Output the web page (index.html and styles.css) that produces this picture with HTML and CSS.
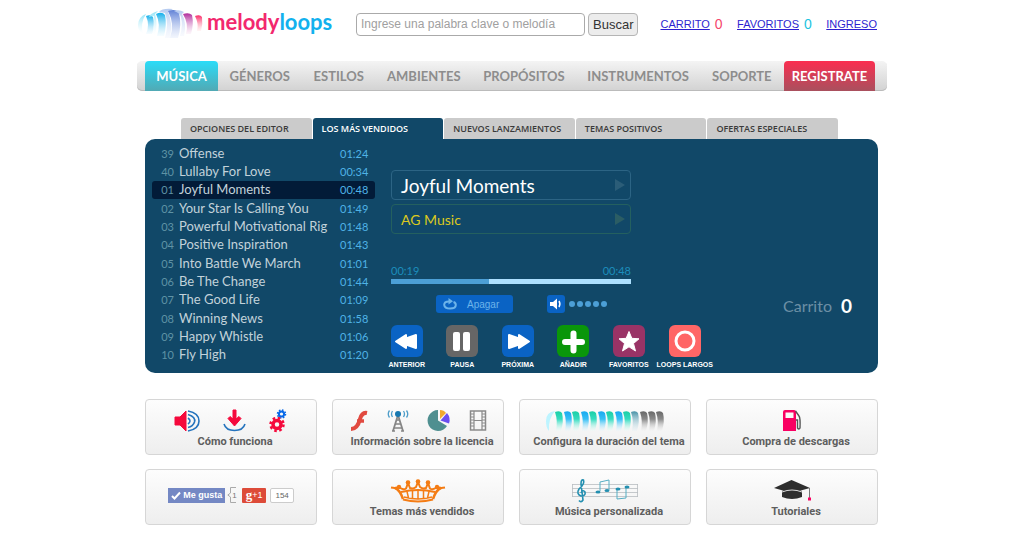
FILE: index.html
```html
<!DOCTYPE html>
<html lang="es">
<head>
<meta charset="utf-8">
<title>melodyloops</title>
<link rel="stylesheet" href="styles.css">
</head>
<body>
<div class="page">
  <header class="header">
    <a class="logo" href="#">
      <svg class="logo-mark" width="66" height="32" viewBox="0 0 66 32" aria-hidden="true">
        <defs>
          <linearGradient id="c1" x2="0" y2="1"><stop offset="0" stop-color="#8fe4f7"/><stop offset="1" stop-color="#fff" stop-opacity=".2"/></linearGradient>
          <linearGradient id="c2" x2="0" y2="1"><stop offset="0" stop-color="#12aeea"/><stop offset="1" stop-color="#e3f6ff" stop-opacity=".3"/></linearGradient>
          <linearGradient id="c3" x2="0" y2="1"><stop offset="0" stop-color="#5f80d6"/><stop offset="1" stop-color="#dfe8fa" stop-opacity=".4"/></linearGradient>
          <linearGradient id="c4" x2="0" y2="1"><stop offset="0" stop-color="#b02a9c"/><stop offset="1" stop-color="#f6dff0" stop-opacity=".3"/></linearGradient>
          <linearGradient id="c5" x2="0" y2="1"><stop offset="0" stop-color="#fb2a68"/><stop offset="1" stop-color="#fdd" stop-opacity=".3"/></linearGradient>
          <linearGradient id="c6" x2="0" y2="1"><stop offset="0" stop-color="#b4caf0"/><stop offset="1" stop-color="#e8eefb" stop-opacity=".3"/></linearGradient>
        </defs>
        <path d="M9 6Q1 9 1 17Q1 23 6 26Q3 15 9 6Z" fill="url(#c1)"/>
        <path d="M9 8Q14 6 16 9Q18 17 15 26H9Q13 17 9 8Z" fill="url(#c2)"/>
        <path d="M21 3Q12 6 12 9L17 8Q18 18 14 27H18Q21 15 18 6Z" fill="url(#c1)"/>
        <path d="M19 6Q25 3 28 7Q30 17 27 28H20Q24 16 19 6Z" fill="url(#c2)"/>
        <path d="M36 1Q25 0 22 4L28 5Q32 16 28 30H33Q36 14 31 4Z" fill="url(#c6)"/>
        <path d="M31 3Q39 0 42 5Q45 17 41 30H33Q38 16 31 3Z" fill="url(#c3)"/>
        <path d="M47 4Q42 1 37 3Q43 5 44 9Q46 18 43 28H47Q50 15 45 6Z" fill="url(#c6)"/>
        <path d="M46 6Q52 4 55 7Q57 16 54 26H49Q52 16 46 6Z" fill="url(#c4)"/>
        <path d="M58 8Q63 6 65 9Q66 16 64 23H60Q62 16 58 8Z" fill="url(#c5)"/>
      </svg>
      <span class="logo-text">melody<span class="logo-loops">loops</span></span>
    </a>
    <form class="search">
      <input class="search-input" type="text" placeholder="Ingrese una palabra clave o melodía" aria-label="Buscar melodía">
      <button class="search-button" type="button">Buscar</button>
    </form>
    <div class="account">
      <span class="account-item"><a href="#">CARRITO</a><span class="count count-cart">0</span></span>
      <span class="account-item"><a href="#">FAVORITOS</a><span class="count count-fav">0</span></span>
      <span class="account-item"><a href="#">INGRESO</a></span>
    </div>
  </header>

  <nav class="nav">
    <a class="nav-link nav-active" href="#">MÚSICA</a>
    <a class="nav-link" href="#">GÉNEROS</a>
    <a class="nav-link" href="#">ESTILOS</a>
    <a class="nav-link" href="#">AMBIENTES</a>
    <a class="nav-link" href="#">PROPÓSITOS</a>
    <a class="nav-link" href="#">INSTRUMENTOS</a>
    <a class="nav-link" href="#">SOPORTE</a>
    <a class="nav-link nav-register" href="#">REGISTRATE</a>
  </nav>

  <main class="main">
    <div class="tabs">
      <button class="tab" type="button">OPCIONES DEL EDITOR</button>
      <button class="tab tab-active" type="button">LOS MÁS VENDIDOS</button>
      <button class="tab" type="button">NUEVOS LANZAMIENTOS</button>
      <button class="tab" type="button">TEMAS POSITIVOS</button>
      <button class="tab" type="button">OFERTAS ESPECIALES</button>
    </div>

    <section class="panel">
      <ol class="playlist">
        <li class="track"><span class="num">39</span><span class="name">Offense</span><span class="time">01:24</span></li>
        <li class="track"><span class="num">40</span><span class="name">Lullaby For Love</span><span class="time">00:34</span></li>
        <li class="track track-active"><span class="num">01</span><span class="name">Joyful Moments</span><span class="time">00:48</span></li>
        <li class="track"><span class="num">02</span><span class="name">Your Star Is Calling You</span><span class="time">01:49</span></li>
        <li class="track"><span class="num">03</span><span class="name">Powerful Motivational Rig</span><span class="time">01:48</span></li>
        <li class="track"><span class="num">04</span><span class="name">Positive Inspiration</span><span class="time">01:43</span></li>
        <li class="track"><span class="num">05</span><span class="name">Into Battle We March</span><span class="time">01:01</span></li>
        <li class="track"><span class="num">06</span><span class="name">Be The Change</span><span class="time">01:44</span></li>
        <li class="track"><span class="num">07</span><span class="name">The Good Life</span><span class="time">01:09</span></li>
        <li class="track"><span class="num">08</span><span class="name">Winning News</span><span class="time">01:58</span></li>
        <li class="track"><span class="num">09</span><span class="name">Happy Whistle</span><span class="time">01:06</span></li>
        <li class="track"><span class="num">10</span><span class="name">Fly High</span><span class="time">01:20</span></li>
      </ol>

      <div class="player">
        <div class="display">
          <button class="field field-title" type="button">Joyful Moments
            <svg width="12" height="14" viewBox="0 0 12 14" aria-hidden="true"><path d="M1 1L11 7L1 13Z" fill="#2b5d78"/></svg>
          </button>
          <button class="field field-artist" type="button">AG Music
            <svg width="12" height="14" viewBox="0 0 12 14" aria-hidden="true"><path d="M1 1L11 7L1 13Z" fill="#2b5d64"/></svg>
          </button>
          <div class="times"><span>00:19</span><span>00:48</span></div>
          <input class="seek" type="range" min="0" max="48" value="19" aria-label="Posición">
          <div class="options">
            <button class="loop" type="button">
              <svg width="14" height="12" viewBox="0 0 14 12" fill="none" stroke="#6db4ea" stroke-width="2" aria-hidden="true"><path d="M6 3.500C2.500 3.500 1.200 5 1.200 6.800C1.500 9.500 4 10.500 7 10.500S12.800 9.500 12.800 7C12.800 5.500 12 4.500 10.500 4"/><path d="M5.500 0L10 3.300L5.500 6.500Z" fill="#6db4ea" stroke="none"/></svg>
              Apagar
            </button>
            <button class="mute" type="button" aria-label="Volumen">
              <svg width="14" height="12" viewBox="0 0 14 12" aria-hidden="true"><path d="M1 4H4L8 0.500V11.500L4 8H1Z" fill="#fff"/><path d="M10 3Q11.800 6 10 9" fill="none" stroke="#fff" stroke-width="1.500"/></svg>
            </button>
            <span class="dots"><i></i><i></i><i></i><i></i><i></i></span>
          </div>
        </div>
        <div class="controls">
          <button class="control" type="button"><span class="tile tile-blue"><svg width="32" height="32" viewBox="0 0 32 32"><path d="M5 16.500L15 10V13.500L25 10V23L15 19.500V23Z" fill="#fff" stroke="#fff" stroke-width="2" stroke-linejoin="round"/></svg></span>ANTERIOR</button>
          <button class="control" type="button"><span class="tile tile-gray"><svg width="32" height="32" viewBox="0 0 32 32"><rect x="7" y="7" width="7" height="19" rx="2" fill="#fff"/><rect x="17" y="7" width="7" height="19" rx="2" fill="#fff"/></svg></span>PAUSA</button>
          <button class="control" type="button"><span class="tile tile-blue"><svg width="32" height="32" viewBox="0 0 32 32"><path d="M27 16.500L17 10V13.500L7 10V23L17 19.500V23Z" fill="#fff" stroke="#fff" stroke-width="2" stroke-linejoin="round"/></svg></span>PRÓXIMA</button>
          <button class="control" type="button"><span class="tile tile-green"><svg width="32" height="32" viewBox="0 0 32 32"><path d="M16.500 8.500V25.500M8 17H25" stroke="#fff" stroke-width="6" stroke-linecap="round"/></svg></span>AÑADIR</button>
          <button class="control" type="button"><span class="tile tile-plum"><svg width="32" height="32" viewBox="0 0 32 32"><path d="M16 6.500L18.800 13.300L26 13.800L20.500 18.500L22.500 26L16 21.800L9.500 26L11.500 18.500L6 13.800L13.200 13.300Z" fill="#fff" stroke="#fff" stroke-linejoin="round"/></svg></span>FAVORITOS</button>
          <button class="control" type="button"><span class="tile tile-coral"><svg width="32" height="32" viewBox="0 0 32 32"><circle cx="16" cy="16" r="9" fill="none" stroke="#fff" stroke-width="3"/></svg></span>LOOPS LARGOS</button>
        </div>
      </div>

      <div class="cart">Carrito <span class="cart-count">0</span></div>
    </section>

    <section class="cards">
      <a class="card" href="#">
        <span class="icons icons-three">
          <svg width="26" height="24" viewBox="0 0 26 24"><path d="M1 8H6L12 2V22L6 16H1Z" fill="#f5093c" stroke="#f5093c" stroke-linejoin="round"/><g fill="none" stroke="#2473bd" stroke-width="1.600"><path d="M14 9Q18 12 14 15"/><path d="M14 5.500Q22 8 20.500 13Q19 17.500 14 18.500"/><path d="M14 2Q25 4 25 12T14 22"/></g></svg>
          <svg width="24" height="24" viewBox="0 0 24 24"><path d="M11 1H14V10L17 7.500L19 9.500L12.500 17L6 9.500L8 7.500L11 10Z" fill="#f5093c" stroke="#f5093c"/><path d="M2 15Q4 21.500 12.500 21.500T23 15" fill="none" stroke="#2473bd" stroke-width="1.600"/></svg>
          <svg width="20" height="24" viewBox="0 0 20 24" fill="none"><circle cx="13.500" cy="5" r="2.600" stroke="#0768e8" stroke-width="2"/><circle cx="13.500" cy="5" r="4" stroke="#0768e8" stroke-width="1.500" stroke-dasharray="1.570 1.570"/><circle cx="9" cy="15.500" r="4" stroke="#f5093c" stroke-width="3.500"/><circle cx="9" cy="15.500" r="6.500" stroke="#f5093c" stroke-width="2.500" stroke-dasharray="2.550 2.550"/></svg>
        </span>
        <span class="card-label">Cómo funciona</span>
      </a>
      <a class="card" href="#">
        <span class="icons icons-four">
          <svg width="20" height="24" viewBox="0 0 20 24" fill="none" stroke="#e14a40" stroke-width="4"><path d="M18 4Q13 3 11 10Q8.500 20 2 20"/><path d="M8 12H15" stroke-width="3.500"/></svg>
          <svg width="22" height="24" viewBox="0 0 22 24" fill="none"><path d="M11 6L6 22M11 6L16 22" stroke="#858585" stroke-width="1.800"/><path d="M9 11H13M8 15H14M7 19H15M5 22H8M14 22H17" stroke="#858585" stroke-width="1.500"/><circle cx="11" cy="5" r="3" fill="#1678b0"/><path d="M5.500 2Q3.500 5 5.500 8M2.500 1.500Q0 5 2.500 8.500M16.500 2Q18.500 5 16.500 8M19.500 1.500Q22 5 19.500 8.500" stroke="#4d9dc9" stroke-width="1.300"/></svg>
          <svg width="24" height="24" viewBox="0 0 24 24"><path d="M11 11.500L11 1A10.500 10.500 0 1 0 20 17Z" fill="#4f8f90"/><path d="M13 10V1Q17 1 19 4Z" fill="#f0a92e"/><path d="M13.500 11.500L20 4Q24 9 22 14.500Z" fill="#6a4ff0"/></svg>
          <svg width="18" height="24" viewBox="0 0 18 24" fill="none" stroke="#8a8a8a"><rect x="1.500" y="2" width="15" height="19" stroke-width="1.500"/><path d="M5 2V21M13 2V21M5 11.500H13" stroke-width="1.200"/><path d="M2 5H5M2 8H5M2 11H5M2 14H5M2 17H5M13 5H16M13 8H16M13 11H16M13 14H16M13 17H16"/></svg>
        </span>
        <span class="card-label">Información sobre la licencia</span>
      </a>
      <a class="card" href="#">
        <span class="icons">
          <svg width="120" height="24" viewBox="0 0 120 24">
            <defs>
              <linearGradient id="s1" x2="0" y2="1"><stop offset="0" stop-color="#19cfa6"/><stop offset=".4" stop-color="#35dcc0"/><stop offset="1" stop-color="#e8fffa" stop-opacity=".2"/></linearGradient>
              <linearGradient id="s2" x2="0" y2="1"><stop offset="0" stop-color="#17aaf0"/><stop offset=".4" stop-color="#36bff5"/><stop offset="1" stop-color="#e3f7ff" stop-opacity=".2"/></linearGradient>
              <linearGradient id="s3" x2="0" y2="1"><stop offset="0" stop-color="#686868"/><stop offset=".4" stop-color="#8a8a8a"/><stop offset="1" stop-color="#eee" stop-opacity=".2"/></linearGradient>
              <linearGradient id="s4" x2="0" y2="1"><stop offset="0" stop-color="#4590a5"/><stop offset="1" stop-color="#ddeef5" stop-opacity=".2"/></linearGradient>
              <path id="slice" d="M0 3Q5 1 7 4Q9 12 6 22H1Q3 12 0 3Z"/>
            </defs>
            <path d="M10 2Q1 3 1 12Q1 19 4 22Q3 10 10 2Z" fill="#bdf4ff"/>
            <use href="#slice" x="10" fill="url(#s1)"/><use href="#slice" x="19" fill="url(#s2)"/><use href="#slice" x="27" fill="url(#s1)"/><use href="#slice" x="36" fill="url(#s2)"/><use href="#slice" x="44" fill="url(#s1)"/><use href="#slice" x="53" fill="url(#s2)"/><use href="#slice" x="61" fill="url(#s1)"/><use href="#slice" x="70" fill="url(#s2)"/><use href="#slice" x="78" fill="url(#s1)"/><use href="#slice" x="86" fill="url(#s4)"/><use href="#slice" x="95" fill="url(#s3)"/><use href="#slice" x="103" fill="url(#s3)"/><use href="#slice" x="111" fill="url(#s3)"/>
          </svg>
        </span>
        <span class="card-label">Configura la duración del tema</span>
      </a>
      <a class="card" href="#">
        <span class="icons">
          <svg width="20" height="24" viewBox="0 0 20 24"><path fill-rule="evenodd" d="M1 3Q1 1 3 1H12Q14 1 14 3V22H1ZM3.500 3.500V9H11.500V3.500Z" fill="#f90062"/><path d="M13.500 2L17 7Q18.500 9 18 19Q17 21 15.500 19V11H14" fill="none" stroke="#555" stroke-width="1.400"/></svg>
        </span>
        <span class="card-label">Compra de descargas</span>
      </a>
      <div class="card">
        <div class="social">
          <button class="like" type="button"><svg width="10" height="9" viewBox="0 0 10 9" aria-hidden="true"><path d="M1 5L3.500 7.500L9 1.500" fill="none" stroke="#fff" stroke-width="2"/></svg>Me gusta</button>
          <span class="like-count"><svg width="10" height="16" viewBox="0 0 10 16" fill="none" stroke="#aaa" aria-hidden="true"><path d="M9 .5H3.500V6L.8 8L3.500 10V15.500H9"/></svg><span>1</span></span>
          <button class="plus" type="button"><span class="plus-g">g</span>+1</button>
          <span class="plus-count">154</span>
        </div>
      </div>
      <a class="card" href="#">
        <span class="icons">
          <svg width="56" height="24" viewBox="0 0 56 24" fill="none" stroke="#f47c14"><path d="M1 8.500Q6 9.500 9 8Q13 11.500 16 9.500L18 4L20 9Q23 10.500 26 8L28 3L30 8Q33 10.500 36 9L38 4L40 9.500Q43 11.500 47 8Q50 9.500 55 8.500" stroke-width="2"/><path d="M5 9Q10 11 13 20M51 9Q46 11 43 20" stroke-width="2.500"/><path d="M11 13Q28 9 45 13M13 20.500Q28 24.500 43 20.500" stroke-width="2"/><path d="M14 18Q28 22 42 18M17 12.500L18.500 19M22.500 12V20M28 11.500V20M33.500 12V20M39 12.500L37.500 19" stroke-width="1.500"/><g fill="#f47c14" stroke="none"><circle cx="18" cy="3.500" r="2.300"/><circle cx="28" cy="2.500" r="2.300"/><circle cx="38" cy="3.500" r="2.300"/><circle cx="9" cy="8" r="2.200"/><circle cx="47" cy="8" r="2.200"/></g></svg>
        </span>
        <span class="card-label">Temas más vendidos</span>
      </a>
      <a class="card" href="#">
        <span class="icons">
          <svg width="68" height="26" viewBox="0 0 68 26" fill="none"><path d="M1 6.500H67M1 10.500H67M1 14.500H67M1 18.500H67M1.500 6V19M66.500 6V19" stroke="#b8bcc0" stroke-width=".8"/><path d="M10 15Q12 11 14 14Q15 18 10 18Q5 16 8 11Q14 6 12.500 2Q10 1 10 6L12 22Q10 25 8 22.500" stroke="#238fb0" stroke-width="1.600"/><path d="M29 13V4L38 2V12M46 11V21L55 20V10" stroke="#56aec4"/><g fill="#238fb0"><ellipse cx="27" cy="14" rx="2.500" ry="1.500"/><ellipse cx="36" cy="12.500" rx="2.500" ry="1.500"/><ellipse cx="47" cy="11" rx="2.500" ry="1.500"/><ellipse cx="56" cy="9" rx="2.500" ry="1.500"/></g></svg>
        </span>
        <span class="card-label">Música personalizada</span>
      </a>
      <a class="card" href="#">
        <span class="icons">
          <svg width="38" height="24" viewBox="0 0 38 24"><path d="M18.500 1L37 9L18.500 14L1 9Z" fill="#2e2e2e"/><path d="M9 12Q19 8 29 12V18Q19 22 9 18Z" fill="#2e2e2e"/><path d="M9 13Q19 9 29 13" fill="none" stroke="#ddd"/><path d="M36.500 9V19" stroke="#777"/><rect x="35" y="18.500" width="3" height="3" fill="#f90062"/></svg>
        </span>
        <span class="card-label">Tutoriales</span>
      </a>
    </section>
  </main>
</div>
</body>
</html>
```
FILE: styles.css
```css
* { box-sizing: border-box; }

body {
  margin: 0;
  background: #fff;
  font-family: "Liberation Sans", sans-serif;
}

button {
  border: 0;
  padding: 0;
  background: none;
  font: inherit;
  color: inherit;
}

svg { display: block; flex: none; }

.page {
  max-width: 750px;
  margin: 0 auto;
  padding: 8px 0;
}

/* Header */
.header {
  display: flex;
  align-items: center;
  height: 32px;
}
.logo {
  display: flex;
  align-items: center;
  gap: 4px;
  width: 219px;
  text-decoration: none;
}
.logo-text {
  font: 700 22px/28px Lato, sans-serif;
  color: #f2286e;
  padding-bottom: 4px;
}
.logo-loops { color: #12b1ee; }
.search { display: flex; gap: 3px; }
.search-input {
  width: 229px;
  height: 23px;
  padding: 0 4px;
  border: 1px solid #aaa;
  border-radius: 4px;
  font: 12px "Liberation Sans", sans-serif;
}
.search-input::placeholder { color: #a0a0a0; }
.search-button {
  padding: 0 4px;
  height: 23px;
  border: 1px solid #b5b5b5;
  border-radius: 4px;
  background: #ececec;
  font-size: 13px;
  color: #333;
}
.account {
  flex: 1;
  display: flex;
  justify-content: space-between;
  padding: 0 10px 0 22px;
  font-size: 11px;
}
.account-item { display: flex; align-items: center; gap: 5px; }
.account a { color: #2d1fd0; }
.count { font-size: 14px; line-height: 14px; }
.count-cart { color: #f5476c; }
.count-fav { color: #1cc3de; }

/* Navigation */
.nav {
  display: grid;
  grid-template-columns: 73fr 83fr 75fr 95fr 105fr 123fr 84fr 91fr;
  margin-top: 21px;
  padding: 0 12px 0 8px;
  border-radius: 5px;
  background: linear-gradient(#f4f4f4, #d2d2d2);
  box-shadow: inset 0 -1px #bbb;
}
.nav-link {
  font: 700 13px/30px Lato, sans-serif;
  text-align: center;
  text-decoration: none;
  color: #8d8d8d;
}
.nav-active {
  border-radius: 4px 4px 0 0;
  background: linear-gradient(#2bdcf8, #51a9b4);
  color: #fff;
}
.nav-register {
  border-radius: 4px 4px 0 0;
  background: linear-gradient(#fb2e50, #a9505e);
  color: #fff;
}

.main { padding: 27px 9px 0 8px; }

/* Category tabs */
.tabs {
  display: grid;
  grid-template-columns: repeat(5, 1fr);
  gap: 1px;
  padding: 0 40px 0 36px;
}
.tab {
  height: 21px;
  padding-left: 9px;
  border-radius: 3px 3px 0 0;
  background: #cbcbcb;
  font: 600 9px/21px "Open Sans", sans-serif;
  text-align: left;
  color: #3a3a3a;
}
.tab-active { background: #114868; color: #fff; }

/* Player panel */
.panel {
  display: flex;
  padding: 5px 0 0 7px;
  min-height: 234px;
  border-radius: 10px;
  background: #114868;
  font-family: Lato, sans-serif;
}
.playlist {
  display: grid;
  grid-template-rows: repeat(12, 1fr);
  width: 223px;
  height: 220px;
  margin: 0;
  padding: 0;
  list-style: none;
  font-size: 13px;
  line-height: 17px;
}
.track {
  display: grid;
  grid-template-columns: 22px 1fr 35px;
  column-gap: 5px;
  align-items: center;
  border-radius: 3px;
  white-space: nowrap;
}
.track-active { background: #021b38; }
.num { text-align: right; font-size: 11px; color: #5f93a5; }
.name { overflow: hidden; color: #c2d2da; }
.time { font-size: 11px; color: #4fb3e6; }

.player { width: 334px; margin-left: 4px; padding-top: 26px; }
.display { padding: 0 82px 0 12px; }
.field {
  display: flex;
  justify-content: space-between;
  align-items: center;
  width: 100%;
  height: 30px;
  margin-bottom: 4px;
  padding: 0 4px 0 9px;
  border: 1px solid #2c6484;
  border-radius: 4px;
}
.field-title { font-size: 19px; color: #fff; }
.field-artist { font-size: 14px; color: #dcc81e; border-color: #24605f; }
.times {
  display: flex;
  justify-content: space-between;
  margin-top: 29px;
  font-size: 11px;
  line-height: 16px;
  color: #1c8dbb;
}
.seek {
  display: block;
  appearance: none;
  width: 100%;
  height: 5px;
  margin: 0;
  background: linear-gradient(to right, #4c9fd6 41%, #ade0ff 41%);
}
.seek::-webkit-slider-thumb { appearance: none; width: 1px; height: 5px; }
.options {
  display: flex;
  align-items: center;
  margin-top: 11px;
  padding-left: 45px;
}
.loop {
  display: flex;
  align-items: center;
  gap: 10px;
  width: 77px;
  height: 18px;
  padding-left: 7px;
  border-radius: 3px;
  background: #0a63c4;
  font: 10px "Liberation Sans", sans-serif;
  color: #6db4ea;
}
.mute {
  display: grid;
  place-items: center;
  width: 18px;
  height: 18px;
  margin-left: 34px;
  border-radius: 3px;
  background: #0a63c4;
}
.dots { display: flex; gap: 2px; margin-left: 4px; }
.dots i { width: 6px; height: 6px; border-radius: 50%; background: #4c9fd6; }
.controls {
  display: grid;
  grid-template-columns: repeat(6, 1fr);
  margin-top: 12px;
}
.control {
  display: flex;
  flex-direction: column;
  align-items: center;
  gap: 3px;
  font: 700 7px/10px "Liberation Sans", sans-serif;
  white-space: nowrap;
  color: #fff;
}
.tile { border-radius: 6px; }
.tile-blue { background: #0a63c4; }
.tile-gray { background: #666; }
.tile-green { background: #0a960a; }
.tile-plum { background: #993366; }
.tile-coral { background: #ff6666; }

.cart {
  display: flex;
  align-items: center;
  align-self: flex-start;
  gap: 9px;
  margin: 150px 26px 0 auto;
  font-size: 16px;
  line-height: 24px;
  color: #6c8fa5;
}
.cart-count { font-size: 19px; font-weight: 700; color: #fff; }

/* Link cards */
.cards {
  display: grid;
  grid-template-columns: repeat(4, 1fr);
  gap: 14px 15px;
  margin-top: 26px;
}
.card {
  display: flex;
  flex-direction: column;
  align-items: center;
  min-height: 56px;
  padding-top: 8px;
  border: 1px solid #d6d6d6;
  border-radius: 4px;
  background: linear-gradient(#fdfdfd, #eeeeee);
  text-decoration: none;
  color: #5e5e5e;
}
.icons { display: flex; align-items: center; height: 26px; }
.icons-three { gap: 22px; }
.icons-four { gap: 18px; }
.card-label {
  padding-left: 8px;
  font: 700 11px/16px Roboto, sans-serif;
  white-space: nowrap;
}
.social {
  display: flex;
  align-items: center;
  height: 34px;
  font-size: 8px;
}
.like {
  display: flex;
  align-items: center;
  gap: 2px;
  height: 15px;
  padding: 0 3px;
  background: #7488c4;
  font-size: 9px;
  font-weight: 700;
  color: #fff;
}
.like-count { display: flex; align-items: center; margin: 0 5px 0 2px; color: #777; }
.like-count span { margin-left: -5px; }
.plus {
  display: flex;
  align-items: center;
  height: 15px;
  padding: 0 4px;
  border-radius: 1px;
  background: #dd4b39;
  font-size: 9px;
  color: #fff;
}
.plus-g { font: 700 13px/12px "Liberation Serif", serif; }
.plus-count {
  margin-left: 4px;
  padding: 0 4px;
  border: 1px solid #ccc;
  border-radius: 2px;
  background: #fff;
  line-height: 13px;
  color: #666;
}
```
